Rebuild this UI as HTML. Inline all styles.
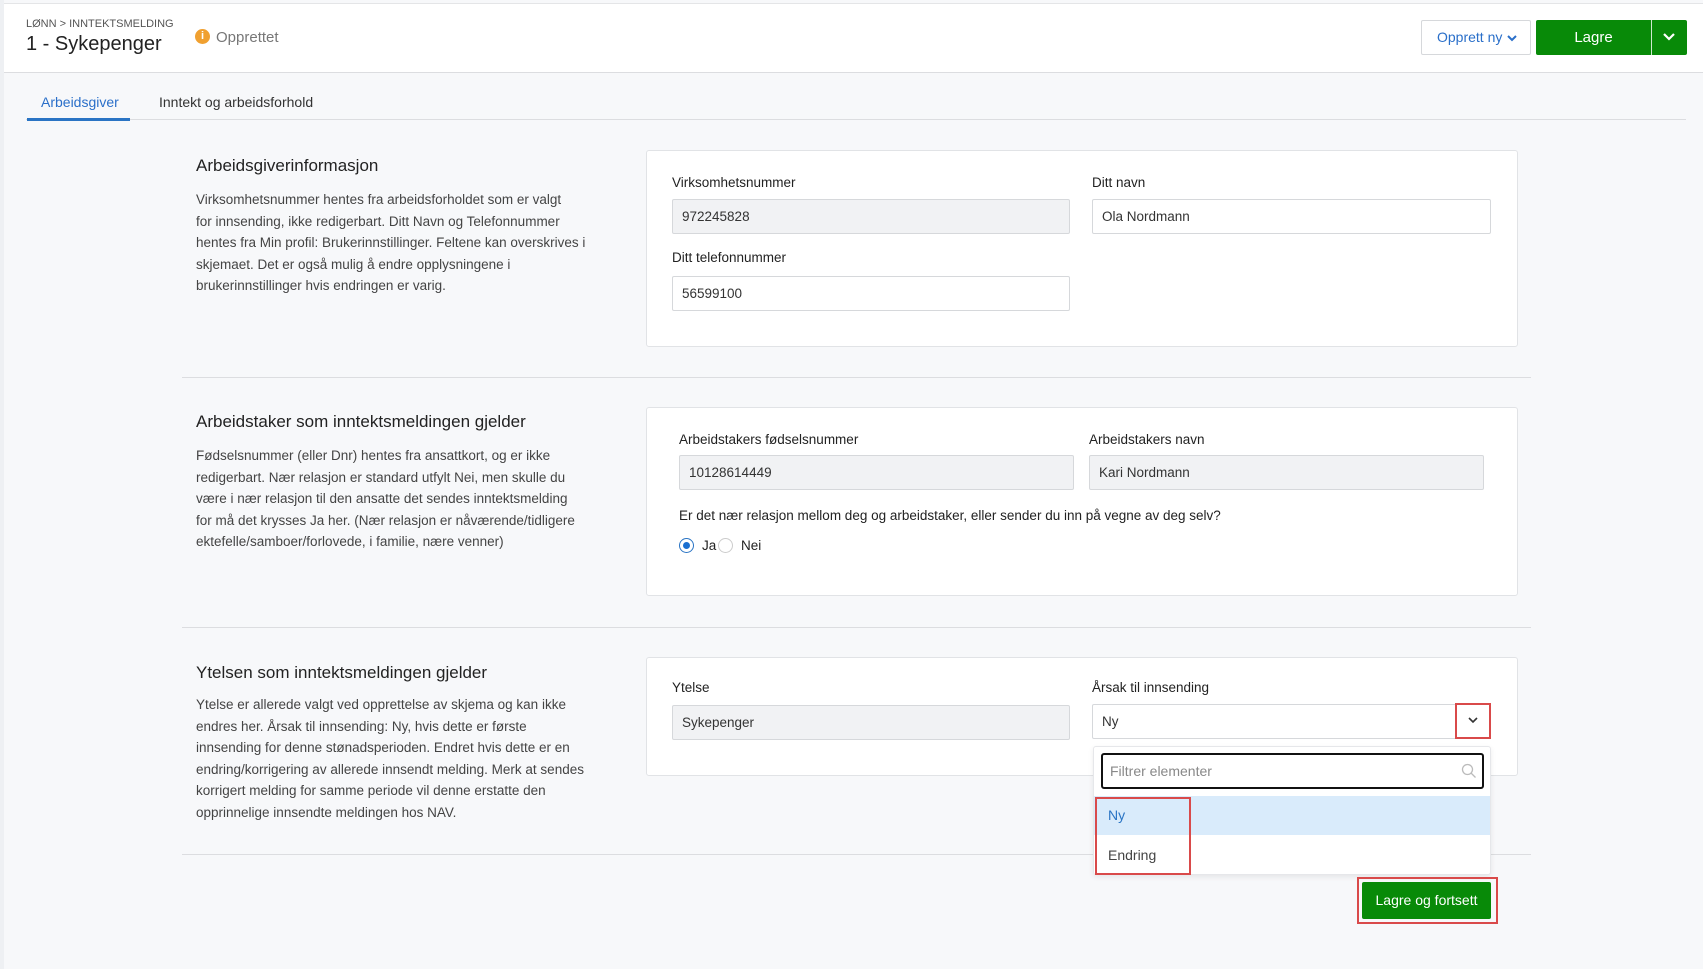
<!DOCTYPE html>
<html><head><meta charset="utf-8"><style>
*{box-sizing:border-box;margin:0;padding:0}
body{width:1703px;height:969px;position:relative;background:#f7f8fa;font-family:"Liberation Sans",sans-serif;color:#222;overflow:hidden}
.a{position:absolute}
.hdr{left:4px;top:3px;width:1699px;height:70px;background:#fff;border-bottom:1px solid #dcdde0;border-top:1px solid #e4e5e7}
.card{background:#fff;border:1px solid #e1e3e6;border-radius:3px}
.lbl{font-size:13.5px;color:#222}
.inp{height:35px;border:1px solid #d6d8db;border-radius:2px;font-size:13.5px;padding:0 9px;line-height:33px;color:#333;background:#fff}
.ro{background:#f1f2f4}
.h{font-size:17px;color:#222}
.p{font-size:13.5px;line-height:21.6px;color:#444;white-space:nowrap}
.div{height:1px;background:#dcdde0;left:182px;width:1349px}
</style></head><body>
<div class="a" style="left:0;top:0;width:4px;height:969px;background:#eef0f3"></div>
<div class="a hdr"></div>
<div class="a" style="left:26px;top:18px;font-size:11px;color:#555">LØNN &gt; INNTEKTSMELDING</div>
<div class="a" style="left:26px;top:33px;font-size:20px;color:#222">1 - Sykepenger</div>
<div class="a" style="left:195px;top:29px;width:15px;height:15px;border-radius:50%;background:#f0a030;color:#fff;font-size:11px;font-weight:bold;text-align:center;line-height:15px">i</div>
<div class="a" style="left:216px;top:29px;font-size:15px;color:#777">Opprettet</div>
<div class="a" style="left:1421px;top:20px;width:110px;height:35px;border:1px solid #d6d8db;border-radius:2px;background:#fff;color:#2a6fc9;font-size:14px;line-height:33px;padding-left:15px">Opprett ny <svg width="12" height="8" viewBox="0 0 12 8"><path d="M2 2l4 4 4-4" stroke="#2a6fc9" stroke-width="2" fill="none"/></svg></div>
<div class="a" style="left:1536px;top:20px;width:151px;height:35px;border-radius:2px;background:#088a08"></div>
<div class="a" style="left:1536px;top:20px;width:115px;height:35px;color:#fff;font-size:15px;line-height:35px;text-align:center">Lagre</div>
<div class="a" style="left:1651px;top:20px;width:1px;height:35px;background:#cfe8cf"></div>
<svg class="a" style="left:1662px;top:32px" width="14" height="10" viewBox="0 0 14 10"><path d="M2 2l5 5 5-5" stroke="#fff" stroke-width="2.2" fill="none"/></svg>
<div class="a" style="left:41px;top:94px;font-size:14px;color:#2a6fc9">Arbeidsgiver</div>
<div class="a" style="left:159px;top:94px;font-size:14px;color:#333">Inntekt og arbeidsforhold</div>
<div class="a" style="left:26px;top:119px;width:1660px;height:1px;background:#dcdde0"></div>
<div class="a" style="left:27px;top:118px;width:103px;height:3px;background:#2a74c4"></div>

<div class="a h" style="left:196px;top:156px">Arbeidsgiverinformasjon</div>
<div class="a p" style="left:196px;top:189px">Virksomhetsnummer hentes fra arbeidsforholdet som er valgt<br>for innsending, ikke redigerbart. Ditt Navn og Telefonnummer<br>hentes fra Min profil: Brukerinnstillinger. Feltene kan overskrives i<br>skjemaet. Det er også mulig å endre opplysningene i<br>brukerinnstillinger hvis endringen er varig.</div>
<div class="a card" style="left:646px;top:150px;width:872px;height:197px"></div>
<div class="a lbl" style="left:672px;top:175px">Virksomhetsnummer</div>
<div class="a inp ro" style="left:672px;top:199px;width:398px">972245828</div>
<div class="a lbl" style="left:1092px;top:175px">Ditt navn</div>
<div class="a inp" style="left:1092px;top:199px;width:399px">Ola Nordmann</div>
<div class="a lbl" style="left:672px;top:250px">Ditt telefonnummer</div>
<div class="a inp" style="left:672px;top:276px;width:398px">56599100</div>
<div class="a div" style="top:377px"></div>

<div class="a h" style="left:196px;top:412px">Arbeidstaker som inntektsmeldingen gjelder</div>
<div class="a p" style="left:196px;top:445px">Fødselsnummer (eller Dnr) hentes fra ansattkort, og er ikke<br>redigerbart. Nær relasjon er standard utfylt Nei, men skulle du<br>være i nær relasjon til den ansatte det sendes inntektsmelding<br>for må det krysses Ja her. (Nær relasjon er nåværende/tidligere<br>ektefelle/samboer/forlovede, i familie, nære venner)</div>
<div class="a card" style="left:646px;top:407px;width:872px;height:189px"></div>
<div class="a lbl" style="left:679px;top:432px">Arbeidstakers fødselsnummer</div>
<div class="a inp ro" style="left:679px;top:455px;width:395px">10128614449</div>
<div class="a lbl" style="left:1089px;top:432px">Arbeidstakers navn</div>
<div class="a inp ro" style="left:1089px;top:455px;width:395px">Kari Nordmann</div>
<div class="a lbl" style="left:679px;top:508px">Er det nær relasjon mellom deg og arbeidstaker, eller sender du inn på vegne av deg selv?</div>
<div class="a" style="left:679px;top:538px;width:15px;height:15px;border-radius:50%;border:1px solid #2a74c4;background:#fff"><div style="margin:3px;width:7px;height:7px;border-radius:50%;background:#1a6fd0"></div></div>
<div class="a lbl" style="left:702px;top:538px">Ja</div>
<div class="a" style="left:718px;top:538px;width:15px;height:15px;border-radius:50%;border:1px solid #ccc;background:#fff"></div>
<div class="a lbl" style="left:741px;top:538px">Nei</div>
<div class="a div" style="top:627px"></div>

<div class="a h" style="left:196px;top:663px">Ytelsen som inntektsmeldingen gjelder</div>
<div class="a p" style="left:196px;top:694px">Ytelse er allerede valgt ved opprettelse av skjema og kan ikke<br>endres her. Årsak til innsending: Ny, hvis dette er første<br>innsending for denne stønadsperioden. Endret hvis dette er en<br>endring/korrigering av allerede innsendt melding. Merk at sendes<br>korrigert melding for samme periode vil denne erstatte den<br>opprinnelige innsendte meldingen hos NAV.</div>
<div class="a card" style="left:646px;top:657px;width:872px;height:119px"></div>
<div class="a lbl" style="left:672px;top:680px">Ytelse</div>
<div class="a inp ro" style="left:672px;top:705px;width:398px">Sykepenger</div>
<div class="a lbl" style="left:1092px;top:680px">Årsak til innsending</div>
<div class="a inp" style="left:1092px;top:704px;width:399px">Ny</div>
<div class="a" style="left:1455px;top:703px;width:36px;height:36px;border:2px solid #d94a4a"></div>
<svg class="a" style="left:1467px;top:716px" width="12" height="8" viewBox="0 0 12 8"><path d="M2 2l4 4 4-4" stroke="#333" stroke-width="1.6" fill="none"/></svg>
<div class="a div" style="top:854px"></div>
<div class="a" style="left:1093px;top:746px;width:398px;height:129px;background:#fff;border:1px solid #e6e7ea;border-radius:3px;box-shadow:0 2px 6px rgba(0,0,0,.08)"></div>
<div class="a" style="left:1101px;top:753px;width:383px;height:36px;border:2px solid #111;border-radius:3px;font-size:14px;color:#888;line-height:32px;padding-left:7px;background:#fff">Filtrer elementer</div>
<svg class="a" style="left:1461px;top:763px" width="16" height="16" viewBox="0 0 16 16"><circle cx="6.5" cy="6.5" r="5" stroke="#bbb" stroke-width="1.3" fill="none"/><path d="M10 10l4.5 4.5" stroke="#bbb" stroke-width="1.3"/></svg>
<div class="a" style="left:1094px;top:796px;width:396px;height:39px;background:#d9ebfb"></div>
<div class="a" style="left:1108px;top:807px;font-size:14px;color:#2a74c4">Ny</div>
<div class="a" style="left:1108px;top:847px;font-size:14px;color:#444">Endring</div>
<div class="a" style="left:1095px;top:797px;width:96px;height:78px;border:2px solid #d94a4a"></div>
<div class="a" style="left:1357px;top:877px;width:141px;height:47px;border:2px solid #d94a4a"></div>
<div class="a" style="left:1362px;top:882px;width:129px;height:37px;background:#088a08;border-radius:2px;color:#fff;font-size:14px;line-height:37px;text-align:center">Lagre og fortsett</div>
</body></html>
